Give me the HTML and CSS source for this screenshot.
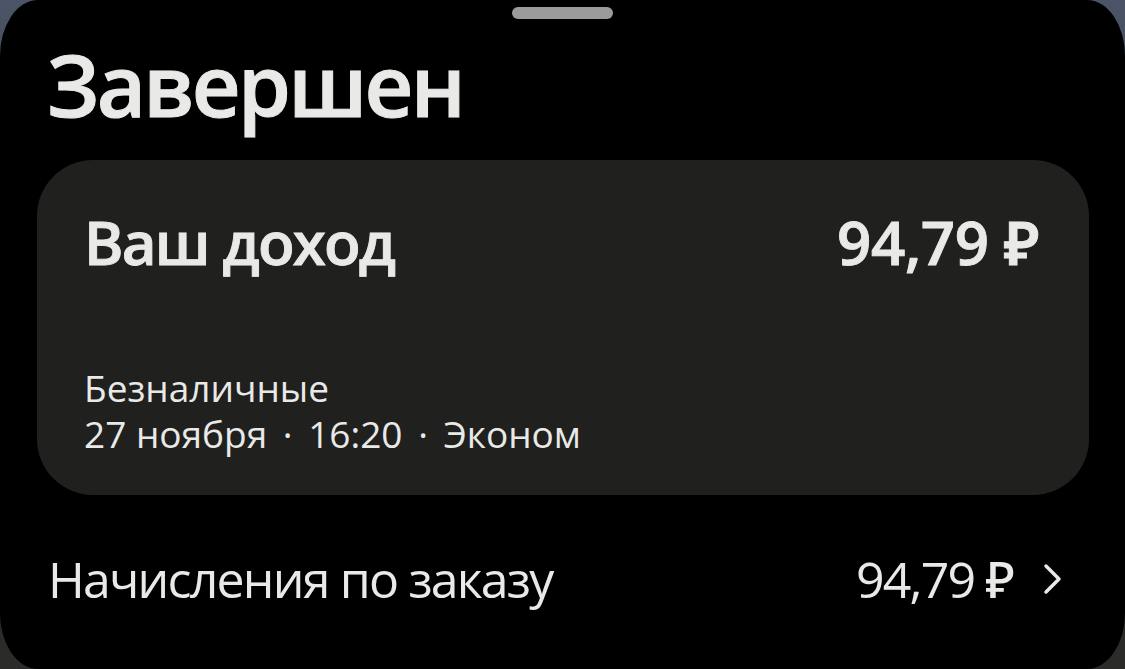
FILE: index.html
```html
<!DOCTYPE html>
<html lang="ru">
<head>
<meta charset="utf-8">
<link rel="stylesheet" href="styles.css">
</head>
<body>
<div class="sheet">
  <div class="handle"></div>
  <h1 class="title">Завершен</h1>
  <div class="card">
    <div class="card-head">
      <span class="card-label">Ваш доход</span>
      <span class="card-amount">94,79 ₽</span>
    </div>
    <div class="card-details">
      <div class="detail">Безналичные</div>
      <div class="detail">27 ноября <span class="dot">·</span> 16:20 <span class="dot">·</span> Эконом</div>
    </div>
  </div>
  <div class="row">
    <span class="row-label">Начисления по заказу</span>
    <span class="row-right">
      <span class="row-amount">94,79 ₽</span>
      <svg class="chevron" width="20" height="32" viewBox="0 0 20 32"><path d="M3 3 L16 16 L3 29" fill="none" stroke="#e9e9e7" stroke-width="3.5" stroke-linecap="round" stroke-linejoin="round"/></svg>
    </span>
  </div>
</div>
</body>
</html>
```
FILE: styles.css
```css
html, body {
  margin: 0;
  padding: 0;
}
body {
  width: 1125px;
  height: 669px;
  overflow: hidden;
  background: linear-gradient(to bottom, #4c5568 0%, #3a404c 30%, #2a2a29 70%, #2b2b29 100%);
  font-family: "Open Sans", "Noto Sans", sans-serif;
  color: #e9e9e7;
}
.sheet {
  width: 1125px;
  height: 669px;
  box-sizing: border-box;
  background: #000;
  border-radius: 38px / 56px;
  padding: 7px 0 0 0;
  display: flex;
  flex-direction: column;
}
.handle {
  align-self: center;
  width: 101px;
  height: 12px;
  border-radius: 6px;
  background: #9b9b9b;
}
.title {
  margin: 23px 0 0 47px;
  font-size: 85px;
  line-height: 85px;
  font-weight: 600;
  letter-spacing: -2.7px;
  -webkit-text-stroke: 1px #e9e9e7;
}
.card {
  margin: 33px 36px 0 37px;
  height: 335px;
  box-sizing: border-box;
  background: #20201f;
  border-radius: 56px;
  padding: 52px 50px 0 47px;
  display: flex;
  flex-direction: column;
}
.card-head {
  display: flex;
  justify-content: space-between;
  align-items: baseline;
  font-size: 60px;
  line-height: 60px;
  font-weight: 600;
  -webkit-text-stroke: 0.9px #e9e9e7;
}
.card-label {
  letter-spacing: -1.8px;
}
.card-amount {
  letter-spacing: -0.4px;
}
.card-details {
  margin-top: 93px;
  font-size: 37px;
  line-height: 46px;
  font-weight: 400;
}
.dot {
  padding: 0 6px;
}
.row {
  margin: 54px 62px 0 48px;
  display: flex;
  justify-content: space-between;
  align-items: center;
  font-size: 50px;
  line-height: 60px;
  font-weight: 500;
  letter-spacing: -1.8px;
}
.row-right {
  display: flex;
  align-items: center;
  gap: 30px;
}
.chevron {
  display: block;
}
```
